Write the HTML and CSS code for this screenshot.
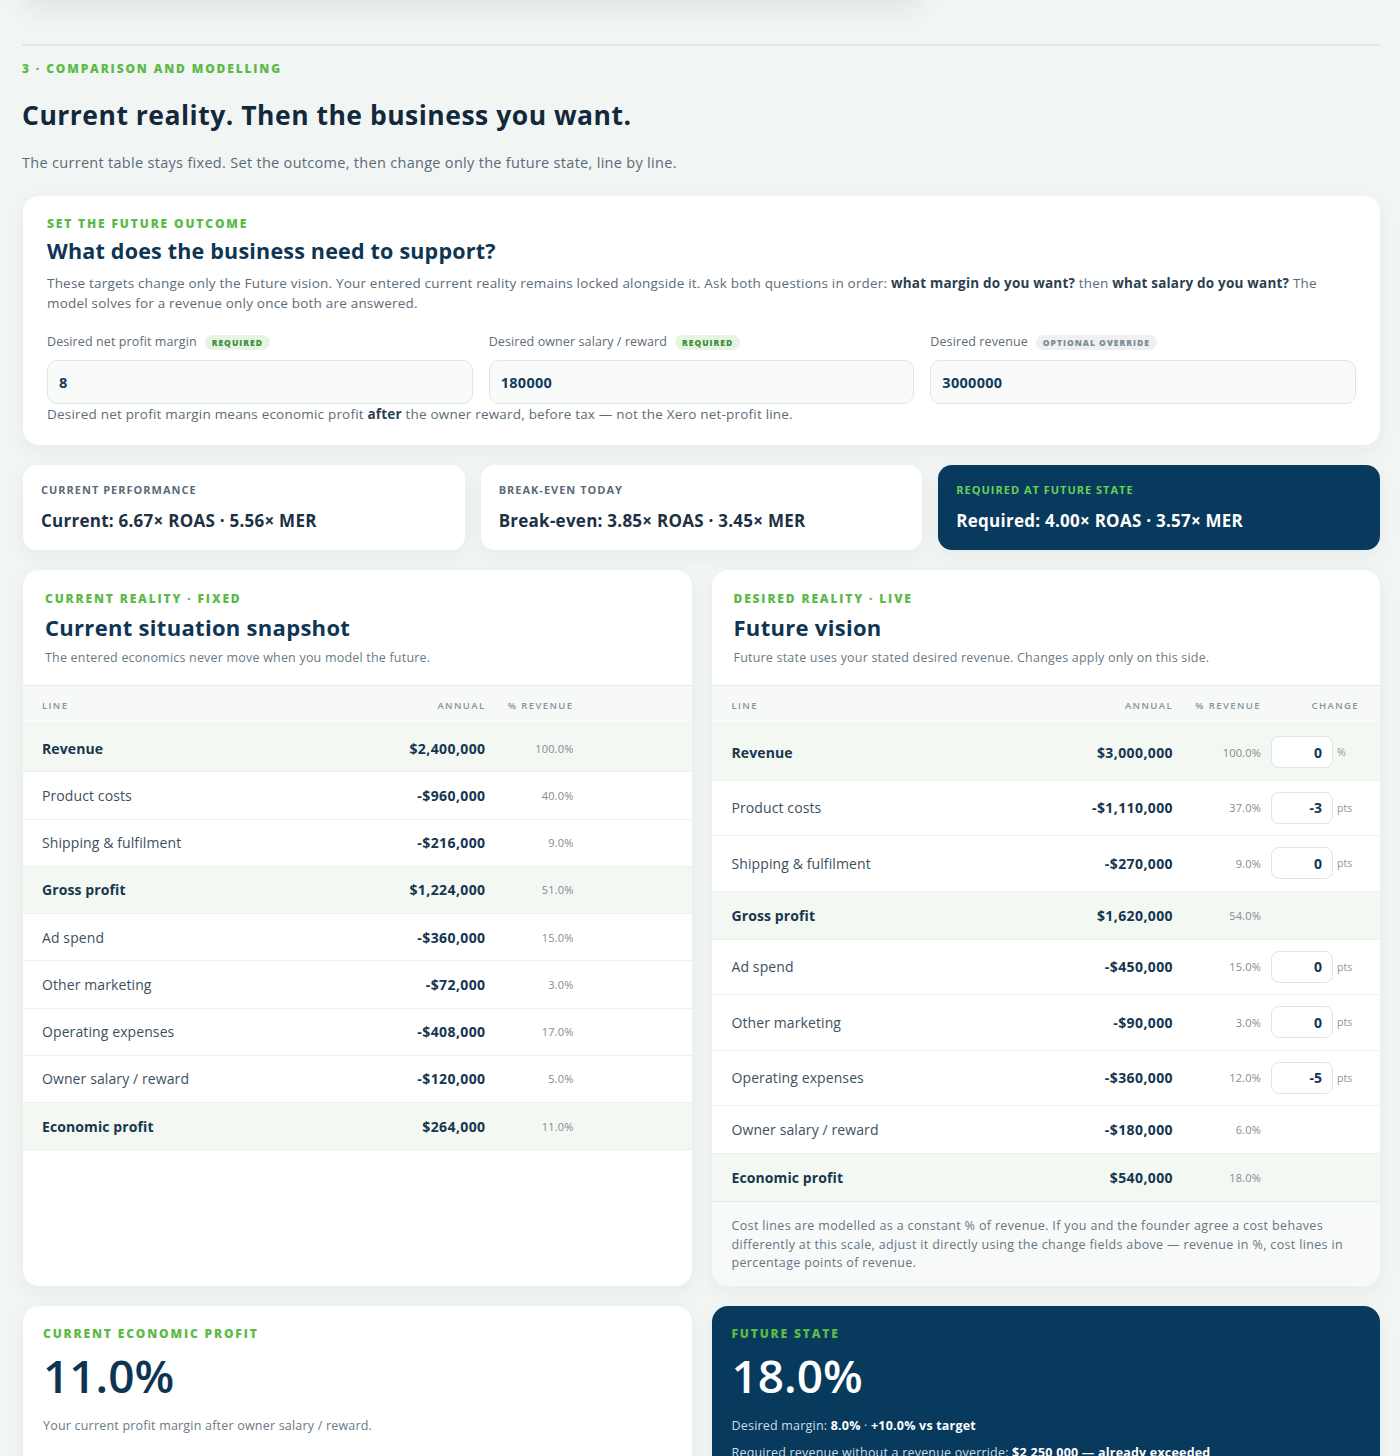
FILE: index.html
```html
<!DOCTYPE html>
<html lang="en">
<head>
<meta charset="utf-8">
<title>Comparison and modelling</title>
<link rel="stylesheet" href="styles.css">
</head>
<body>
<div class="page">
  <div class="prev-card"></div>
  <section class="section">
    <p class="eyebrow">3 · Comparison and modelling</p>
    <h1 class="page-title">Current reality. Then the business you want.</h1>
    <p class="page-sub">The current table stays fixed. Set the outcome, then change only the future state, line by line.</p>

    <div class="card outcome">
      <p class="eyebrow">Set the future outcome</p>
      <h2 class="card-title">What does the business need to support?</h2>
      <p class="card-desc">These targets change only the Future vision. Your entered current reality remains locked alongside it. Ask both questions in order: <b>what margin do you want?</b> then <b>what salary do you want?</b> The model solves for a revenue only once both are answered.</p>
      <div class="fields">
        <div class="field">
          <div class="field-label">Desired net profit margin <span class="badge badge-req">Required</span></div>
          <div class="input">8</div>
        </div>
        <div class="field">
          <div class="field-label">Desired owner salary / reward <span class="badge badge-req">Required</span></div>
          <div class="input">180000</div>
        </div>
        <div class="field">
          <div class="field-label">Desired revenue <span class="badge badge-opt">Optional override</span></div>
          <div class="input">3000000</div>
        </div>
      </div>
      <p class="helper">Desired net profit margin means economic profit <b>after</b> the owner reward, before tax — not the Xero net-profit line.</p>
    </div>

    <div class="metrics">
      <div class="metric">
        <div class="metric-label">Current performance</div>
        <div class="metric-value">Current: 6.67× ROAS · 5.56× MER</div>
      </div>
      <div class="metric">
        <div class="metric-label">Break-even today</div>
        <div class="metric-value">Break-even: 3.85× ROAS · 3.45× MER</div>
      </div>
      <div class="metric metric-dark">
        <div class="metric-label">Required at future state</div>
        <div class="metric-value">Required: 4.00× ROAS · 3.57× MER</div>
      </div>
    </div>

    <div class="panels">
      <div class="panel">
        <div class="panel-head">
          <p class="eyebrow">Current reality · Fixed</p>
          <h3 class="panel-title">Current situation snapshot</h3>
          <p class="panel-desc">The entered economics never move when you model the future.</p>
        </div>
        <div class="table t-left">
          <div class="tr th"><span>Line</span><span class="num">Annual</span><span class="num">% Revenue</span><span></span></div>
          <div class="tr hl"><span class="lbl">Revenue</span><span class="num val">$2,400,000</span><span class="num pct">100.0%</span><span></span></div>
          <div class="tr"><span class="lbl">Product costs</span><span class="num val">-$960,000</span><span class="num pct">40.0%</span><span></span></div>
          <div class="tr"><span class="lbl">Shipping &amp; fulfilment</span><span class="num val">-$216,000</span><span class="num pct">9.0%</span><span></span></div>
          <div class="tr hl"><span class="lbl">Gross profit</span><span class="num val">$1,224,000</span><span class="num pct">51.0%</span><span></span></div>
          <div class="tr"><span class="lbl">Ad spend</span><span class="num val">-$360,000</span><span class="num pct">15.0%</span><span></span></div>
          <div class="tr"><span class="lbl">Other marketing</span><span class="num val">-$72,000</span><span class="num pct">3.0%</span><span></span></div>
          <div class="tr"><span class="lbl">Operating expenses</span><span class="num val">-$408,000</span><span class="num pct">17.0%</span><span></span></div>
          <div class="tr"><span class="lbl">Owner salary / reward</span><span class="num val">-$120,000</span><span class="num pct">5.0%</span><span></span></div>
          <div class="tr hl last"><span class="lbl">Economic profit</span><span class="num val">$264,000</span><span class="num pct">11.0%</span><span></span></div>
        </div>
      </div>

      <div class="panel">
        <div class="panel-head">
          <p class="eyebrow">Desired reality · Live</p>
          <h3 class="panel-title">Future vision</h3>
          <p class="panel-desc">Future state uses your stated desired revenue. Changes apply only on this side.</p>
        </div>
        <div class="table t-right">
          <div class="tr th"><span>Line</span><span class="num">Annual</span><span class="num">% Revenue</span><span class="num">Change</span></div>
          <div class="tr hl has-chg"><span class="lbl">Revenue</span><span class="num val">$3,000,000</span><span class="num pct">100.0%</span><span class="chg"><span class="chg-in">0</span><span class="unit">%</span></span></div>
          <div class="tr has-chg"><span class="lbl">Product costs</span><span class="num val">-$1,110,000</span><span class="num pct">37.0%</span><span class="chg"><span class="chg-in">-3</span><span class="unit">pts</span></span></div>
          <div class="tr has-chg"><span class="lbl">Shipping &amp; fulfilment</span><span class="num val">-$270,000</span><span class="num pct">9.0%</span><span class="chg"><span class="chg-in">0</span><span class="unit">pts</span></span></div>
          <div class="tr hl"><span class="lbl">Gross profit</span><span class="num val">$1,620,000</span><span class="num pct">54.0%</span><span></span></div>
          <div class="tr has-chg"><span class="lbl">Ad spend</span><span class="num val">-$450,000</span><span class="num pct">15.0%</span><span class="chg"><span class="chg-in">0</span><span class="unit">pts</span></span></div>
          <div class="tr has-chg"><span class="lbl">Other marketing</span><span class="num val">-$90,000</span><span class="num pct">3.0%</span><span class="chg"><span class="chg-in">0</span><span class="unit">pts</span></span></div>
          <div class="tr has-chg"><span class="lbl">Operating expenses</span><span class="num val">-$360,000</span><span class="num pct">12.0%</span><span class="chg"><span class="chg-in">-5</span><span class="unit">pts</span></span></div>
          <div class="tr"><span class="lbl">Owner salary / reward</span><span class="num val">-$180,000</span><span class="num pct">6.0%</span><span></span></div>
          <div class="tr hl last"><span class="lbl">Economic profit</span><span class="num val">$540,000</span><span class="num pct">18.0%</span><span></span></div>
        </div>
        <p class="panel-note">Cost lines are modelled as a constant % of revenue. If you and the founder agree a cost behaves differently at this scale, adjust it directly using the change fields above — revenue in %, cost lines in percentage points of revenue.</p>
      </div>
    </div>

    <div class="panels results">
      <div class="card result">
        <p class="eyebrow">Current economic profit</p>
        <div class="big">11.0%</div>
        <p class="result-desc">Your current profit margin after owner salary / reward.</p>
      </div>
      <div class="card result result-dark">
        <p class="eyebrow">Future state</p>
        <div class="big">18.0%</div>
        <p class="result-desc">Desired margin: <b>8.0%</b> · <b>+10.0% vs target</b></p>
        <p class="result-desc">Required revenue without a revenue override: <b>$2,250,000 — already exceeded</b></p>
      </div>
    </div>
  </section>
</div>
</body>
</html>
```

FILE: styles.css
```css
* { box-sizing: border-box; }
html, body { margin: 0; padding: 0; }
body {
  background: #f1f5f4;
  font-family: "Open Sans", "Noto Sans", sans-serif;
  color: #1d3347;
  overflow: hidden;
}
p { margin: 0; }
h1, h2, h3 { margin: 0; }

.page {
  padding: 0 20px 0 22px;
}
.prev-card {
  height: 120px;
  margin-top: -120px;
  width: 900px;
  background: #f4f7f6;
  border-radius: 18px;
  box-shadow: 0 10px 26px rgba(40, 70, 70, 0.08);
}
.section {
  border-top: 2px solid #e2e9e7;
  margin-top: 44px;
  padding-top: 16px;
}

.eyebrow {
  font-size: 12px;
  line-height: 14px;
  font-weight: 800;
  letter-spacing: 1.85px;
  text-transform: uppercase;
  color: #5cba48;
}
.page-title {
  margin-top: 22px;
  font-size: 26.5px;
  line-height: 34px;
  font-weight: 700;
  color: #13293b;
  letter-spacing: 0.5px;
}
.page-sub {
  margin-top: 21px;
  font-size: 14.5px;
  line-height: 20px;
  letter-spacing: 0.3px;
  color: #5b6b77;
}

.card {
  background: #fff;
  border-radius: 16px;
  box-shadow: 0 6px 20px rgba(30, 60, 60, 0.05);
}
.outcome {
  margin-top: 23px;
  margin-left: 1px;
  padding: 21px 24px 22px;
}
.card-title {
  margin-top: 6px;
  font-size: 21.5px;
  line-height: 28px;
  font-weight: 700;
  letter-spacing: 0.2px;
  color: #0e3553;
}
.card-desc {
  margin-top: 8px;
  max-width: 1290px;
  font-size: 13.5px;
  line-height: 20px;
  letter-spacing: 0.2px;
  color: #5d6c78;
}
.card-desc b { color: #2b3f50; font-weight: 700; }

.fields {
  margin-top: 20px;
  display: grid;
  grid-template-columns: repeat(3, 1fr);
  gap: 16px;
}
.field-label {
  font-size: 12.5px;
  line-height: 18px;
  letter-spacing: 0.1px;
  color: #5d6c78;
  display: flex;
  align-items: center;
  gap: 8px;
}
.badge {
  font-size: 8.5px;
  line-height: 15px;
  font-weight: 800;
  letter-spacing: 1px;
  text-transform: uppercase;
  padding: 0 7px;
  border-radius: 8px;
}
.badge-req { background: #e5f4e3; color: #3f8d3c; }
.badge-opt { background: #edf1f3; color: #7c8a95; }
.input {
  margin-top: 9px;
  height: 44px;
  border: 1px solid #dfe7e6;
  background: #f9fbfb;
  border-radius: 10px;
  padding: 0 11px;
  display: flex;
  align-items: center;
  font-size: 14.5px;
  font-weight: 700;
  letter-spacing: 0.3px;
  color: #123a5a;
}
.helper {
  margin-top: 1px;
  font-size: 13.5px;
  line-height: 18px;
  letter-spacing: 0.2px;
  color: #5d6c78;
}
.helper b { color: #2b3f50; }

.metrics {
  margin-top: 20px;
  margin-left: 1px;
  display: grid;
  grid-template-columns: repeat(3, 1fr);
  gap: 16px;
}
.metric {
  background: #fff;
  border-radius: 14px;
  padding: 19px 18px 18px;
  box-shadow: 0 6px 20px rgba(30, 60, 60, 0.05);
}
.metric-label {
  font-size: 11px;
  line-height: 12px;
  font-weight: 700;
  letter-spacing: 1px;
  text-transform: uppercase;
  color: #5a6a77;
}
.metric-value {
  margin-top: 14px;
  font-size: 17px;
  line-height: 22px;
  font-weight: 700;
  letter-spacing: 0.25px;
  color: #1c3144;
}
.metric-dark { background: #083a5e; }
.metric-dark .metric-label { color: #69cf55; }
.metric-dark .metric-value { color: #fff; }

.panels {
  margin-top: 20px;
  margin-left: 1px;
  display: grid;
  grid-template-columns: 1fr 1fr;
  gap: 20px;
}
.panel {
  background: #fff;
  border-radius: 16px;
  overflow: hidden;
  box-shadow: 0 6px 20px rgba(30, 60, 60, 0.05);
  display: flex;
  flex-direction: column;
}
.panel-head {
  padding: 22px 22px 18px;
  border-bottom: 1px solid #e4ebea;
}
.panel-title {
  margin-top: 7px;
  font-size: 22px;
  line-height: 28px;
  font-weight: 700;
  letter-spacing: 0.3px;
  color: #0e3553;
}
.panel-desc {
  margin-top: 8px;
  font-size: 12.5px;
  line-height: 18px;
  letter-spacing: 0.2px;
  color: #6b7a85;
}

.tr {
  display: grid;
  grid-template-columns: 1fr 120px 88px 118px;
  align-items: center;
  padding: 0 0 0 19px;
  border-bottom: 1px solid #edf2f1;
  min-height: 47.25px;
}
.t-right .tr {
  grid-template-columns: 1fr 120px 88px 98px;
  padding: 0 21px 0 20px;
  min-height: 48px;
}
.t-right .tr.has-chg { min-height: 55.5px; }
.tr.th, .t-right .tr.th {
  min-height: 39px;
  background: #f6f9f8;
  font-size: 9.5px;
  font-weight: 600;
  letter-spacing: 1.4px;
  text-transform: uppercase;
  color: #8795a0;
}
.tr.hl { background: #f3f8f2; }
.tr.last { border-bottom: 1px solid #e8eeed; }
.num { text-align: right; }
.lbl {
  font-size: 14px;
  letter-spacing: 0.1px;
  color: #3c4f5e;
}
.hl .lbl { font-weight: 700; color: #17374f; }
.val {
  font-size: 14px;
  font-weight: 700;
  letter-spacing: 0.4px;
  color: #143651;
}
.pct {
  font-size: 11px;
  letter-spacing: 0.2px;
  color: #7f8c96;
}
.chg {
  display: flex;
  align-items: center;
  padding-left: 10px;
  gap: 4px;
}
.chg-in {
  width: 62px;
  height: 32px;
  border: 1px solid #dde6e4;
  border-radius: 8px;
  background: #fff;
  display: flex;
  align-items: center;
  justify-content: flex-end;
  padding-right: 10px;
  font-size: 14px;
  font-weight: 700;
  color: #143651;
}
.unit {
  font-size: 10.5px;
  color: #8a97a0;
}
.panel-note {
  flex: 1;
  background: #f8fafa;
  padding: 15px 20px 13px;
  font-size: 12.5px;
  line-height: 18.5px;
  letter-spacing: 0.35px;
  color: #66757f;
}

.results { margin-top: 20px; }
.result {
  padding: 21px 20px 24px;
  min-height: 200px;
}
.big {
  margin-top: 8px;
  font-size: 46px;
  line-height: 52px;
  font-weight: 600;
  color: #0d3553;
}
.result-desc {
  margin-top: 16px;
  font-size: 12.5px;
  line-height: 18px;
  letter-spacing: 0.2px;
  color: #6b7a85;
}
.result-dark { background: #083a5e; }
.result-dark .big { color: #fff; }
.result-dark .result-desc { color: #cfdde7; }
.result-dark .result-desc + .result-desc { margin-top: 9px; }
.result-dark .result-desc b { color: #fff; }
```
